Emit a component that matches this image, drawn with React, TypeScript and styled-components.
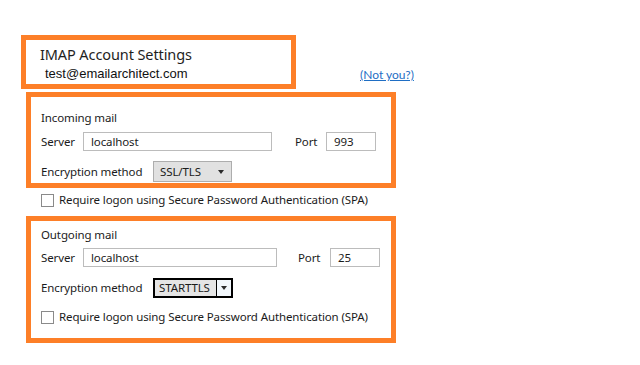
import React from 'react';
import styled, { createGlobalStyle } from 'styled-components';

const Global = createGlobalStyle`
  html, body { margin: 0; padding: 0; background: #ffffff; }
  body {
    width: 640px; height: 365px; overflow: hidden;
    font-family: "Noto Sans", "Open Sans", sans-serif;
    color: #1b1b1b;
  }
`;

const ORANGE = '#fd7f28';
const UI_FONT = `
  font-size: 11.5px;
  letter-spacing: -0.12px;
`;

const Page = styled.div`
  display: flex;
  flex-direction: column;
  padding: 35px 0 0 21px;
`;

const HeaderRow = styled.div`
  display: flex;
  align-items: flex-end;
`;

const TitleBox = styled.div`
  width: 275px;
  height: 54px;
  box-sizing: border-box;
  border: 5px solid ${ORANGE};
  padding: 5px 0 0 14px;
`;

const Title = styled.div`
  font-size: 14.5px;
  letter-spacing: -0.1px;
  line-height: 18px;
  color: #1e1e1e;
`;

const Email = styled.div`
  font-family: "Liberation Sans", Arial, sans-serif;
  font-size: 13px;
  line-height: 15px;
  margin: 3px 0 0 5px;
  color: #111;
`;

const NotYou = styled.a`
  font-family: Lato, "Noto Sans", sans-serif;
  font-size: 12px;
  line-height: 14px;
  color: #1f6ec4;
  text-decoration: underline;
  margin: 0 0 7px 64px;
  cursor: pointer;
`;

const Section = styled.div<{ $top: number; $h: number; $pt: number }>`
  width: 370px;
  height: ${p => p.$h}px;
  box-sizing: border-box;
  border: 5px solid ${ORANGE};
  margin: ${p => p.$top}px 0 0 5px;
  padding: ${p => p.$pt}px 0 0 10px;
  display: flex;
  flex-direction: column;
`;

const SectionTitle = styled.div`
  ${UI_FONT}
  line-height: 16px;
`;

const Row = styled.div<{ $mt: number; $h: number }>`
  display: flex;
  align-items: center;
  height: ${p => p.$h}px;
  margin-top: ${p => p.$mt}px;
`;

const Label = styled.span<{ $w: number; $pl?: number }>`
  width: ${p => p.$w}px;
  padding-left: ${p => p.$pl ?? 0}px;
  box-sizing: border-box;
  flex: none;
  ${UI_FONT}
  line-height: 16px;
`;

const TextBox = styled.div<{ $w: number }>`
  width: ${p => p.$w}px;
  height: 19px;
  box-sizing: border-box;
  border: 1px solid #bcbcbc;
  padding-left: 7px;
  ${UI_FONT}
  line-height: 17px;
  flex: none;
`;

const Select = styled.div<{ $focused?: boolean }>`
  width: ${p => (p.$focused ? 80 : 79)}px;
  height: ${p => (p.$focused ? 20 : 21)}px;
  box-sizing: border-box;
  border: ${p => (p.$focused ? '2px solid #000' : '1px solid #adadad')};
  background: #e1e1e1;
  display: flex;
  align-items: stretch;
  ${UI_FONT}
  flex: none;
`;

const SelectValue = styled.span<{ $focused?: boolean }>`
  flex: 1;
  padding-left: ${p => (p.$focused ? 4 : 6)}px;
  line-height: ${p => (p.$focused ? 16 : 19)}px;
  background: ${p => (p.$focused ? '#e5e5e5' : 'transparent')};
  color: #1b1b1b;
`;

const SelectArrow = styled.span<{ $focused?: boolean }>`
  width: ${p => (p.$focused ? 14 : 20)}px;
  flex: none;
  display: flex;
  align-items: center;
  justify-content: center;
  background: ${p => (p.$focused ? '#f2f7fc' : 'transparent')};
  border-left: ${p => (p.$focused ? '1px solid #000' : 'none')};
  &::after {
    content: '';
    width: 0;
    height: 0;
    border-left: 3.5px solid transparent;
    border-right: 3.5px solid transparent;
    border-top: 4px solid #2b2b2b;
  }
`;

const CheckRow = styled.label<{ $mt: number; $ml: number }>`
  display: flex;
  align-items: center;
  margin: ${p => p.$mt}px 0 0 ${p => p.$ml}px;
  height: 16px;
  ${UI_FONT}
  line-height: 16px;
`;

const CheckBox = styled.span`
  width: 13px;
  height: 13px;
  box-sizing: border-box;
  border: 1px solid #8a8a8a;
  background: #fff;
  margin-right: 5px;
  flex: none;
`;

type ServerProps = {
  port: string;
  enc: string;
  focused?: boolean;
  wide?: boolean;
};

const ServerRows: React.FC<ServerProps> = ({ port, enc, focused, wide }) => (
  <>
    <Row $mt={focused ? 5 : 6} $h={19}>
      <Label $w={42}>Server</Label>
      <TextBox $w={wide ? 194 : 189}>localhost</TextBox>
      <Label $w={wide ? 53 : 54} $pl={wide ? 21 : 23}>
        Port
      </Label>
      <TextBox $w={50}>{port}</TextBox>
    </Row>
    <Row $mt={focused ? 11 : 10} $h={focused ? 20 : 21}>
      <Label $w={112}>Encryption method</Label>
      <Select $focused={focused}>
        <SelectValue $focused={focused}>{enc}</SelectValue>
        <SelectArrow $focused={focused} />
      </Select>
    </Row>
  </>
);

export default function App() {
  return (
    <>
      <Global />
      <Page>
        <HeaderRow>
          <TitleBox>
            <Title>IMAP Account Settings</Title>
            <Email>test@emailarchitect.com</Email>
          </TitleBox>
          <NotYou>(Not you?)</NotYou>
        </HeaderRow>

        <Section $top={3} $h={96} $pt={13}>
          <SectionTitle>Incoming mail</SectionTitle>
          <ServerRows port="993" enc="SSL/TLS" />
        </Section>

        <CheckRow $mt={4} $ml={20}>
          <CheckBox />
          Require logon using Secure Password Authentication (SPA)
        </CheckRow>

        <Section $top={8} $h={127} $pt={6}>
          <SectionTitle>Outgoing mail</SectionTitle>
          <ServerRows port="25" enc="STARTTLS" focused wide />
          <CheckRow $mt={11} $ml={0}>
            <CheckBox />
            Require logon using Secure Password Authentication (SPA)
          </CheckRow>
        </Section>
      </Page>
    </>
  );
}
